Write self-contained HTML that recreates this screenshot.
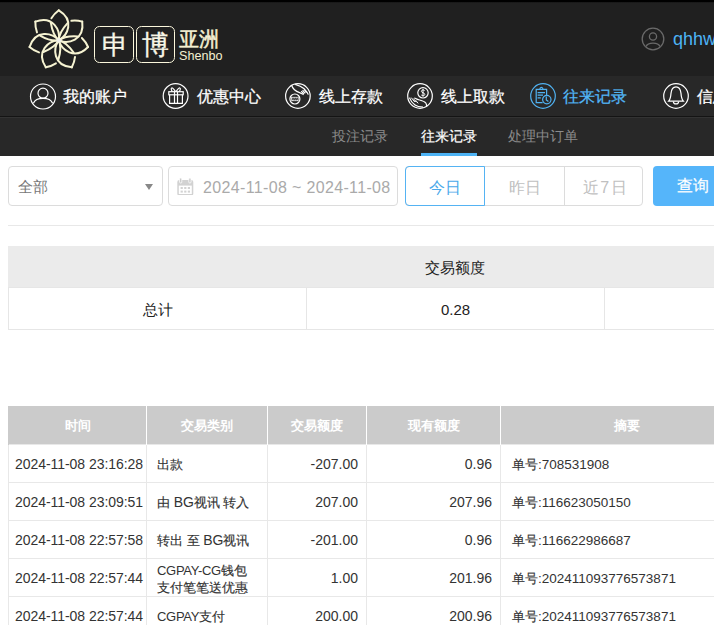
<!DOCTYPE html>
<html><head><meta charset="utf-8">
<style>
*{margin:0;padding:0;box-sizing:border-box}
html,body{width:714px;height:625px;overflow:hidden;background:#fff}
body{position:relative;font-family:"Liberation Sans",sans-serif;color:#333}
.abs{position:absolute}
#hdr{position:absolute;left:0;top:0;width:714px;height:76px;background:#202020}
#hdr .topline{position:absolute;left:0;top:0;width:714px;height:3px;background:linear-gradient(#000 0,#000 1.6px,#1c1c1c 2.6px,#202020 3px)}
#nav{position:absolute;left:0;top:76px;width:714px;height:40px;background:#282828}
#navline{position:absolute;left:0;top:116px;width:714px;height:1px;background:#141414}
#sub{position:absolute;left:0;top:117px;width:714px;height:39px;background:#282828;border-top:1px solid #333}
.ni{position:absolute;top:76px;height:40px}
.ni svg{position:absolute;left:0;top:7px}
.ni span{position:absolute;top:1px;line-height:40px;font-size:16px;color:#fff;white-space:nowrap;-webkit-text-stroke:0.25px currentColor}
.sb{position:absolute;top:118px;line-height:37px;font-size:14px;color:#8c8c8c;white-space:nowrap}
.box{position:absolute;border:1px solid #dcdcdc;border-radius:4px;background:#fff}
.tb{position:absolute;top:168px;height:40px;line-height:40px;font-size:16px;text-align:center;color:#c0c0c0}
table{border-collapse:collapse;position:absolute}
#sum td{border:1px solid #e6e6e6;text-align:center;font-size:15px;color:#222;height:42px}
#tx{left:8px;top:406px;table-layout:fixed;width:745px}
#tx th{background:#cbcbcb;color:#fff;font-weight:bold;font-size:13px;height:38px;border-right:1px solid #fff;text-align:center;padding-top:2px}
#tx th:first-child{border-left:1px solid #cbcbcb}
#tx td{border:1px solid #e8e8e8;font-size:13px;color:#333;-webkit-text-stroke:0.15px #333;height:38px;line-height:17px;padding:2px 9px 0 10px}
#tx td.r{text-align:right;font-size:14px;padding-right:8px}
#tx td.s{padding-left:11px}
#tx td.m{padding-top:3px}
#tx i{font-style:normal;font-size:14px}
#tx i.c{font-size:13px;letter-spacing:-0.3px}
#tx td.s i{font-size:13.5px}
#tx td.d,#tx td.r,#tx i{-webkit-text-stroke:0}
#tx td.d{text-align:left;font-size:14px;padding:2px 0 0 6px;letter-spacing:-0.05px}
</style></head><body>
<div id="hdr"><div class="topline"></div>
<svg class="abs" style="left:27px;top:8px" width="64" height="64" viewBox="-31.8 -32.3 64 64">
 
 <g fill="none" stroke="#f6f3d2" stroke-width="2" stroke-linecap="round">
  <g transform="rotate(0)"><path d="M0,0 C8.7,-4.7 16.4,-20 0,-30"/><path d="M0,0 Q-6,-5 -8,-17.6M0,-30 Q-4.6,-26.6 -7.4,-22"/></g><g transform="rotate(51.43)"><path d="M0,0 C8.7,-4.7 16.4,-20 0,-30"/><path d="M0,0 Q-6,-5 -8,-17.6M0,-30 Q-4.6,-26.6 -7.4,-22"/></g><g transform="rotate(102.86)"><path d="M0,0 C8.7,-4.7 16.4,-20 0,-30"/><path d="M0,0 Q-6,-5 -8,-17.6M0,-30 Q-4.6,-26.6 -7.4,-22"/></g><g transform="rotate(154.29)"><path d="M0,0 C8.7,-4.7 16.4,-20 0,-30"/><path d="M0,0 Q-6,-5 -8,-17.6M0,-30 Q-4.6,-26.6 -7.4,-22"/></g><g transform="rotate(205.71)"><path d="M0,0 C8.7,-4.7 16.4,-20 0,-30"/><path d="M0,0 Q-6,-5 -8,-17.6M0,-30 Q-4.6,-26.6 -7.4,-22"/></g><g transform="rotate(257.14)"><path d="M0,0 C8.7,-4.7 16.4,-20 0,-30"/><path d="M0,0 Q-6,-5 -8,-17.6M0,-30 Q-4.6,-26.6 -7.4,-22"/></g><g transform="rotate(308.57)"><path d="M0,0 C8.7,-4.7 16.4,-20 0,-30"/><path d="M0,0 Q-6,-5 -8,-17.6M0,-30 Q-4.6,-26.6 -7.4,-22"/></g></g>
 <circle r="2.4" fill="#f0f0ea"/>
</svg>
<div class="abs" style="left:94px;top:26px;width:40px;height:37px;border:1.5px solid #fbf7dc;border-radius:5.5px"></div>
<div class="abs" style="left:136px;top:26px;width:39px;height:37px;border:1.5px solid #fbf7dc;border-radius:5.5px"></div>
<div class="abs" style="left:101.5px;top:25.5px;font-size:26px;line-height:38px;color:#f8f6e6;-webkit-text-stroke:0.35px #f8f6e6">申</div>
<div class="abs" style="left:141.5px;top:25.5px;font-size:27px;line-height:38px;color:#f8f6e6;-webkit-text-stroke:0.35px #f8f6e6">博</div>
<div class="abs" style="left:179px;top:27.5px;font-size:20px;line-height:22px;color:#f4f0d2;-webkit-text-stroke:0.5px #f4f0d2">亚洲</div>
<div class="abs" style="left:179px;top:49px;font-size:12.6px;line-height:14px;color:#f4f0d2">Shenbo</div>
<svg class="abs" style="left:641px;top:27px" width="24" height="24" viewBox="0 0 24 24">
 <g fill="none" stroke="#6a6a6a" stroke-width="1.3"><circle cx="12" cy="12" r="10.8"/><circle cx="12" cy="9.5" r="3.6"/><path d="M5,19.5 C7,15 17,15 19,19.5"/></g>
</svg>
<div class="abs" style="left:673px;top:27px;font-size:18px;line-height:24px;color:#4db3f5">qhhw</div>
</div>
<div id="nav"></div><div id="navline"></div><div id="sub"></div>

<div class="ni" style="left:29px">
 <svg width="28" height="28" viewBox="0 0 28 28"><g fill="none" stroke="#fff" stroke-width="1.2"><circle cx="14" cy="13.5" r="12.5"/><circle cx="14" cy="10.2" r="5"/><path d="M4.4,20.2 C7,13.8 21,13.8 23.6,20.2"/></g></svg>
 <span style="left:34px">我的账户</span>
</div>
<div class="ni" style="left:162px">
 <svg width="28" height="28" viewBox="0 0 28 28"><g fill="none" stroke="#fff" stroke-width="1.2"><circle cx="13.6" cy="13" r="12.4"/><rect x="6.8" y="8.7" width="14.4" height="3.1"/><path d="M7.6,11.8V20.4H20.4V11.8"/><path d="M12.5,8.7V20.4M15.5,8.7V20.4"/><path d="M13.6,8.6 C12,6.4 10.5,4.6 9.7,5 C8.8,5.4 9.3,7.2 10.4,8.7"/><path d="M14,8.6 C15.6,6.4 17.1,4.6 17.9,5 C18.8,5.4 18.3,7.2 17.2,8.7"/></g></svg>
 <span style="left:35px">优惠中心</span>
</div>
<div class="ni" style="left:284px">
 <svg width="28" height="28" viewBox="0 0 28 28"><g fill="none" stroke="#fff" stroke-width="1.2"><circle cx="13.9" cy="13" r="12.3"/><path d="M7.6,2.3 C8.8,6.2 12,8.6 15.6,9.6 C17.2,10.1 18.4,11.2 19.6,11.6"/><path d="M11.2,1.3 C14.5,2.2 17.6,3.6 20.2,5.8 C22.2,7.8 23.6,9.6 24.3,11.6"/><path d="M18.6,7.2 L21.2,10.4M20.2,6.4 L22.6,9.6M17.2,8.2 L19.8,11"/><circle cx="10.9" cy="16" r="5"/><rect x="7.2" y="13.9" width="7.4" height="4.2" fill="#fff" stroke="none"/><path d="M8,17.4 L9,14.6 L10.1,17.4 L11.1,14.6 L12.1,17.4 L13.1,14.6 L14,17.4" stroke="#282828" stroke-width="0.9"/></g></svg>
 <span style="left:35px">线上存款</span>
</div>
<div class="ni" style="left:406px">
 <svg width="28" height="28" viewBox="0 0 28 28"><g fill="none" stroke="#fff" stroke-width="1.2"><circle cx="14" cy="13" r="12.3"/><circle cx="17" cy="9.8" r="5.2"/><path d="M18.6,7.6 C18,6.6 15.4,6.6 15.4,8.4 C15.4,10 18.8,9.6 18.8,11.4 C18.8,13.1 16,13.1 15.3,12 M17,6V13.6" stroke-width="1"/><path d="M3.4,14.6 C4.6,17.6 6.4,20.2 9,22 C11,23.4 14,24 17,24.2"/><path d="M8.2,15 C10,15.6 11.8,16.6 13.6,17 C16,17.6 18.6,18.4 19.8,20 C20.4,21 20.6,22 20.6,23"/><path d="M5.2,14.6 L8.8,19M7.4,15.6 L10.2,19.2M9.6,17.2 L12.2,20.4" stroke-width="1"/></g></svg>
 <span style="left:35px">线上取款</span>
</div>
<div class="ni" style="left:529px">
 <svg width="28" height="28" viewBox="0 0 28 28"><g fill="none" stroke="#50b2f2" stroke-width="1.2"><circle cx="14" cy="13" r="12.3"/><path d="M13.6,19.6H7.2V6.4H17.6V12"/><path d="M10.8,6.3 C11,3.6 13.8,3.6 14,6.3"/><path d="M8.6,9.6H16M8.6,12.2H14M8.6,14.8H11.8"/><circle cx="17.8" cy="16.6" r="4.2"/><path d="M17.3,13.6V17 L19.4,18.6"/></g></svg>
 <span style="left:34px;color:#52b6f6">往来记录</span>
</div>
<div class="ni" style="left:662px">
 <svg width="28" height="28" viewBox="0 0 28 28"><g fill="none" stroke="#fff" stroke-width="1.2"><circle cx="14" cy="13" r="12.3"/><path d="M6.6,18.2 C8.2,16.4 8.8,13.4 9,10.4 C9.4,6 11.4,3.8 14,3.8 C16.6,3.8 18.6,6 19,10.4 C19.2,13.4 19.8,16.4 21.4,18.2 Z"/><path d="M11.4,18.4 C11.4,21.8 16.6,21.8 16.6,18.4"/></g></svg>
 <span style="left:35px">信息</span>
</div>

<div class="sb" style="left:332px">投注记录</div>
<div class="sb" style="left:421px;color:#fff;-webkit-text-stroke:0.2px #fff">往来记录</div>
<div class="abs" style="left:421px;top:153px;width:56px;height:3px;background:#4db3f5"></div>
<div class="sb" style="left:508px">处理中订单</div>

<!-- filters -->
<div class="box" style="left:8px;top:166px;width:155px;height:40px"></div>
<div class="abs" style="left:18px;top:167px;line-height:40px;font-size:15px;color:#777">全部</div>
<div class="abs" style="left:145px;top:184px;width:0;height:0;border-left:4px solid transparent;border-right:4px solid transparent;border-top:6px solid #888"></div>
<div class="box" style="left:168px;top:166px;width:230px;height:40px"></div>
<svg class="abs" style="left:177px;top:178px" width="17" height="17" viewBox="0 0 17 17"><rect x="0.3" y="2" width="16" height="15.6" rx="2" fill="#d2d2d2"/><rect x="1.8" y="7.6" width="13" height="8.4" fill="#fff"/><g fill="#d2d2d2"><rect x="3.6" y="9" width="2.2" height="2"/><rect x="7.2" y="9" width="2.2" height="2"/><rect x="10.8" y="9" width="2.2" height="2"/><rect x="3.6" y="12.6" width="2.2" height="2"/><rect x="7.2" y="12.6" width="2.2" height="2"/><rect x="10.8" y="12.6" width="2.2" height="2"/></g><g fill="#c8c8c8" stroke="#fff" stroke-width="0.8"><rect x="2.6" y="0" width="2.2" height="5" rx="1"/><rect x="11.8" y="0" width="2.2" height="5" rx="1"/></g></svg>
<div class="abs" style="left:203px;top:167.5px;line-height:40px;font-size:16px;letter-spacing:0.35px;color:#aaa;white-space:nowrap">2024-11-08 ~ 2024-11-08</div>
<div class="abs" style="left:405px;top:166px;width:238px;height:40px;border:1px solid #dcdcdc;border-radius:4px"></div>
<div class="abs" style="left:564px;top:166px;width:1px;height:40px;background:#dcdcdc"></div>
<div class="abs" style="left:405px;top:166px;width:80px;height:40px;border:1px solid #55b3f3;border-radius:4px 0 0 4px"></div>
<div class="tb" style="left:405px;width:80px;color:#4aa9ea">今日</div>
<div class="tb" style="left:485px;width:79px">昨日</div>
<div class="tb" style="left:566px;width:79px;letter-spacing:1.5px">近7日</div>
<div class="abs" style="left:653px;top:166px;width:80px;height:40px;background:#55b5fa;border-radius:4px"></div>
<div class="abs" style="left:677px;top:166px;line-height:40px;font-size:16px;color:#fff;-webkit-text-stroke:0.2px #fff">查询</div>

<div class="abs" style="left:8px;top:225px;width:706px;height:1px;background:#e8e8e8"></div>

<div class="abs" style="left:8px;top:246px;width:706px;height:42px;background:#ebebeb"></div>
<div class="abs" style="left:8px;top:247px;width:894px;line-height:42px;text-align:center;font-size:15px;color:#222">交易额度</div>
<table id="sum" style="left:8px;top:287px;width:895px;table-layout:fixed">
 <tr><td style="width:298px;padding-top:3px">总计</td><td style="width:298px;padding-top:1px">0.28</td><td></td></tr>
</table>

<table id="tx">
 <tr><th style="width:138px">时间</th><th style="width:121px">交易类别</th><th style="width:99px">交易额度</th><th style="width:134px">现有额度</th><th style="width:253px">摘要</th></tr>
 <tr><td class="d">2024-11-08 23:16:28</td><td>出款</td><td class="r">-207.00</td><td class="r">0.96</td><td class="s">单号<i>:708531908</i></td></tr>
 <tr><td class="d">2024-11-08 23:09:51</td><td>由 <i>BG</i>视讯 转入</td><td class="r">207.00</td><td class="r">207.96</td><td class="s">单号<i>:116623050150</i></td></tr>
 <tr><td class="d">2024-11-08 22:57:58</td><td>转出 至 <i>BG</i>视讯</td><td class="r">-201.00</td><td class="r">0.96</td><td class="s">单号<i>:116622986687</i></td></tr>
 <tr><td class="d">2024-11-08 22:57:44</td><td class="m"><i class="c">CGPAY-CG</i>钱包<br>支付笔笔送优惠</td><td class="r">1.00</td><td class="r">201.96</td><td class="s">单号<i>:202411093776573871</i></td></tr>
 <tr><td class="d">2024-11-08 22:57:44</td><td><i class="c">CGPAY</i>支付</td><td class="r">200.00</td><td class="r">200.96</td><td class="s">单号<i>:202411093776573871</i></td></tr>
</table>
</body></html>
